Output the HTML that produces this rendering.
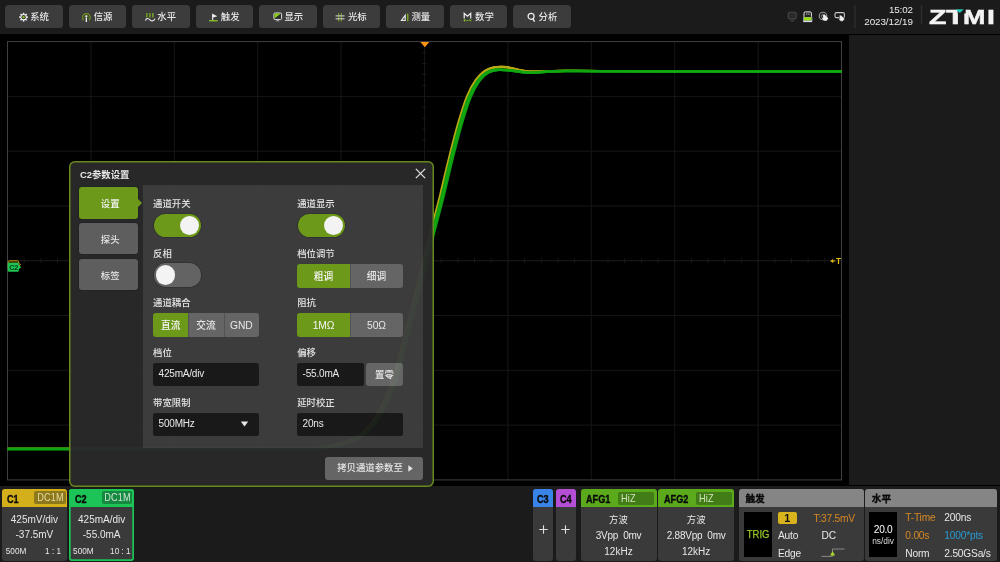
<!DOCTYPE html>
<html lang="zh-CN">
<head>
<meta charset="utf-8">
<title>C2参数设置</title>
<style>
*{box-sizing:border-box;margin:0;padding:0}
html,body{width:1000px;height:562px;overflow:hidden;background:#000}
body{position:relative;font-family:"Liberation Sans","Noto Sans CJK SC",sans-serif;color:#e6e6e6;font-size:10px;line-height:1}
.abs{position:absolute}
/* top bar */
#topbar{opacity:.999;will-change:transform,opacity;position:absolute;left:0;top:0;width:1000px;height:34px;background:#1c1c1c}
.tbtn{position:absolute;top:5px;width:57.5px;height:23.2px;background:#3d3d3d;border-radius:3.5px;color:#e6e6e6;font-size:9.4px;font-weight:500;line-height:23.4px;white-space:nowrap}
.tbtn svg{position:absolute;left:13.5px;top:6.5px;width:10px;height:10px}
.tbtn span{position:absolute;left:25.2px;top:0}
/* right panel */
#rpanel{position:absolute;left:849.2px;top:34.8px;width:150.8px;height:450.5px;background:#1b1b1b}
/* scope */
#scope{position:absolute;left:0;top:34px;width:849px;height:452px;background:#000}
/* bottom bar */
#bottom{opacity:.999;will-change:transform,opacity;position:absolute;left:0;top:486.2px;width:1000px;height:75.8px;background:#1c1c1c}

/* dialog */
#dlg{position:absolute;z-index:5;left:69px;top:161.2px;width:365px;height:326.2px;background:#2a2a2a;border:0;box-shadow:inset 0 0 0 1.5px #6a8f1c;border-radius:6px;opacity:.962;will-change:transform,opacity}
#dlg .in{position:absolute;left:-69px;top:-161.2px;width:0;height:0}
#dlg .title{position:absolute;left:80px;top:169px;font-size:9.4px;font-weight:bold;color:#f2f2f2;line-height:12px;white-space:nowrap}
#dlg .close{position:absolute;left:414.9px;top:168px;width:11px;height:11px}
.tab{position:absolute;left:78.6px;width:59.2px;height:31.2px;border-radius:3px;background:#626262;color:#f0f0f0;font-size:9.4px;font-weight:500;line-height:33.4px;text-align:center;padding-left:4px;box-shadow:0 0 0 .6px #222226}
.tab.on{background:#72a01c;color:#fff}
.tab.on:after{content:"";position:absolute;left:59px;top:11.5px;border-left:4px solid #72a01c;border-top:4px solid transparent;border-bottom:4px solid transparent}
#pane{position:absolute;left:142.7px;top:185.4px;width:280.2px;height:262.4px;background:#3f3f3f}
.lbl{position:absolute;font-size:9.4px;font-weight:500;line-height:12px;color:#ededed;white-space:nowrap}
.tog{position:absolute;width:47.2px;height:23.2px;border-radius:11.6px;background:#686868;box-shadow:0 0 0 .6px #2c2c30}
.tog i{position:absolute;left:2px;top:1.9px;width:19.4px;height:19.4px;border-radius:50%;background:#fdfdfd}
.tog.on{background:#72a01c}
.tog.on i{left:25.8px}
.seg{position:absolute;height:23.8px;display:flex;border-radius:3px;overflow:hidden;font-size:9.7px;font-weight:500;line-height:25.8px;text-align:center;color:#f0f0f0}
.seg b{font-weight:inherit;flex:1 1 0;background:#6a6a6a;box-shadow:inset 1px 0 0 #565656}
.seg b:first-child{box-shadow:none}
.seg b.l{font-size:10.3px;font-weight:normal;letter-spacing:-.1px;line-height:26px}
.seg b.on{background:#72a01c;color:#fff}
.inp{position:absolute;height:23px;border-radius:2.5px;background:#1b1b1b;color:#f2f2f2;font-size:10px;line-height:21.6px;padding-left:5.6px;white-space:nowrap;letter-spacing:-.2px}
.btn{position:absolute;border-radius:3px;background:#6a6a6a;color:#f0f0f0;font-size:9.4px;font-weight:500;text-align:center;white-space:nowrap}

/* bottom */
.ch{position:absolute;top:2.8px;height:72px;border-radius:3px;background:#3b3b3b;overflow:hidden;font-size:10px;color:#e8e8e8}
.ch .hd{position:absolute;left:0;top:0;right:0;height:18px}
.ch .nm{position:absolute;left:5.5px;top:1.1px;font-size:10.6px;font-weight:bold;-webkit-text-stroke:.35px #0a0a0a;color:#0a0a0a;line-height:18.6px;transform:scaleX(.86);transform-origin:0 50%;white-space:nowrap}
.ch .tag{position:absolute;top:2.5px;height:13px;border-radius:2px;font-size:10.6px;line-height:13.4px;text-align:center;color:#e6e0c0;letter-spacing:.2px}
.ch .tag span{display:inline-block;transform:scaleX(.86);transform-origin:50% 50%}
.ch .r{position:absolute;left:0;right:0;text-align:center;line-height:12px;white-space:nowrap}
.ch .s{position:absolute;font-size:8.2px;line-height:10px;white-space:nowrap}
.bt{position:absolute;white-space:nowrap;line-height:12px;font-size:10.2px;letter-spacing:-.2px;margin-top:1.1px}

#logo{position:absolute;left:0;top:0;font-family:"Liberation Sans",sans-serif;font-weight:bold;font-size:20.4px;line-height:20px;color:#f4f4f4;will-change:transform}
#logo span{-webkit-text-stroke:.5px #f4f4f4;position:absolute;top:6.6px;display:block;transform-origin:0 50%}
</style>
</head>
<body>
<div id="topbar">
<div class="tbtn" style="left:5.00px"><svg viewBox="0 0 10 10"><g stroke="#ececec" stroke-width="1.5"><line x1="4.6" y1="0.7" x2="4.6" y2="9.6"/><line x1="0.15" y1="5.15" x2="9.05" y2="5.15"/><line x1="1.5" y1="2.05" x2="7.7" y2="8.25"/><line x1="7.7" y1="2.05" x2="1.5" y2="8.25"/></g><circle cx="4.6" cy="5.15" r="3.1" fill="#ececec"/><circle cx="4.6" cy="5.15" r="2.1" fill="#333"/><circle cx="4.6" cy="5.15" r="1.15" fill="#8fd014"/></svg><span>系统</span></div>
<div class="tbtn" style="left:68.55px"><svg viewBox="0 0 10 10"><path d="M1.6 8.2 A3.9 3.9 0 1 1 7.1 8.2" fill="none" stroke="#6e8f22" stroke-width="1.25"/><path d="M2.9 6.6 A2 2 0 1 1 5.8 6.6" fill="none" stroke="#55701c" stroke-width=".9"/><line x1="4.35" y1="5.6" x2="4.35" y2="10" stroke="#f2f2f2" stroke-width="1.3"/><circle cx="4.35" cy="4.3" r="1.05" fill="#f2f2f2"/></svg><span>信源</span></div>
<div class="tbtn" style="left:132.10px"><svg viewBox="0 0 10 10" style="overflow:visible"><g stroke="#8cc81e" stroke-width="1.1"><line x1="0.9" y1="0.9" x2="0.9" y2="5.4"/><line x1="3.9" y1="0.9" x2="3.9" y2="5.4"/><line x1="6.9" y1="0.9" x2="6.9" y2="5.4"/></g><path d="M-0.6 8.4 C0.6 5.6 2.6 6.4 4 7.8 S7.8 9.6 9 6.6" fill="none" stroke="#ececec" stroke-width="1.15"/></svg><span>水平</span></div>
<div class="tbtn" style="left:195.65px"><svg viewBox="0 0 10 10"><path d="M3.1 1.4 L8.3 4.3 L4.2 5.6 L4.2 8.2 L3.1 8.2 Z" fill="#f0f0f0"/><rect x="0.1" y="8.1" width="8.6" height="1.3" fill="#8cc81e"/></svg><span>触发</span></div>
<div class="tbtn" style="left:259.20px"><svg viewBox="0 0 10 10"><rect x="0.9" y="1" width="7.7" height="6.6" rx="1.2" fill="#2e2e2e" stroke="#e4e4e4" stroke-width="1"/><path d="M1.5 1.6 L7.8 1.6 L1.5 6.6 Z" fill="#8cd018"/><path d="M3 9.3 Q4.75 7.2 6.5 9.3 Z" fill="#d8d8d8"/></svg><span>显示</span></div>
<div class="tbtn" style="left:322.75px"><svg viewBox="0 0 10 10" style="overflow:visible"><g stroke="#7fae1e" stroke-width="1"><line x1="2.65" y1="1.1" x2="2.65" y2="9.5"/><line x1="5.25" y1="1.1" x2="5.25" y2="9.5"/></g><g stroke="#d6d6d6" stroke-width="1.05"><line x1="-0.4" y1="3.9" x2="8.5" y2="3.9"/><line x1="-0.4" y1="6.8" x2="8.5" y2="6.8"/></g></svg><span>光标</span></div>
<div class="tbtn" style="left:386.30px"><svg viewBox="0 0 10 10"><path d="M0.3 9.1 L5.8 1.5 L5.8 9.1 Z M2.6 7.9 L4.6 7.9 L4.6 5.1 Z" fill="#ececec" fill-rule="evenodd"/><line x1="7.8" y1="1.4" x2="7.8" y2="9.3" stroke="#8cc81e" stroke-width="1.1"/></svg><span>测量</span></div>
<div class="tbtn" style="left:449.85px"><svg viewBox="0 0 10 10"><path d="M1.2 6.5 L1.2 1.4 L4.45 4.3 L7.7 1.4 L7.7 6.5" fill="none" stroke="#f0f0f0" stroke-width="1.2" stroke-linejoin="miter"/><g stroke="#8cc81e" stroke-width=".95"><line x1="0.5" y1="8.4" x2="2.7" y2="8.4"/><line x1="1.6" y1="7.3" x2="1.6" y2="9.5"/><line x1="3.6" y1="8.4" x2="5.4" y2="8.4"/><line x1="6.4" y1="7.5" x2="8.2" y2="9.3"/><line x1="8.2" y1="7.5" x2="6.4" y2="9.3"/></g></svg><span>数学</span></div>
<div class="tbtn" style="left:513.40px"><svg viewBox="0 0 10 10"><circle cx="4.1" cy="4.3" r="3" fill="none" stroke="#ececec" stroke-width="1.25"/><line x1="5.9" y1="6.9" x2="7.6" y2="9.6" stroke="#ececec" stroke-width="1.5"/></svg><span>分析</span></div>

<svg class="abs" style="left:780px;top:0;will-change:transform" width="220" height="34" viewBox="780 0 220 34">
<!-- status icons -->
<g fill="none" stroke="#414141" stroke-width="1.5"><rect x="788.4" y="12.6" width="7.6" height="6.2" rx="1.2" fill="#262626"/><path d="M790.2 20.8 H794.2" stroke-width="1.3"/><path d="M790.7 15.6 q1.5 1.3 3 0" stroke-width=".8"/></g>
<g><rect x="804" y="11.9" width="7.4" height="6" rx="1.2" fill="#222" stroke="#e8e8e8" stroke-width="1"/><rect x="806.3" y="13.5" width="1.1" height="1.1" fill="#e8e8e8"/><rect x="808.3" y="13.5" width="1.1" height="1.1" fill="#e8e8e8"/><rect x="803.8" y="17.3" width="7.9" height="3.4" fill="#98e012"/><rect x="803.2" y="20.6" width="8.9" height="1.5" fill="#dcdcf0"/><path d="M803.5 17.3 V21 M812 17.3 V21" stroke="#b8b8d8" stroke-width=".7"/></g>
<g><circle cx="823" cy="16" r="3.8" fill="none" stroke="#9a9a9a" stroke-width="1.1"/><circle cx="823" cy="16" r="1.8" fill="none" stroke="#8a8a8a" stroke-width=".8"/><path d="M822.6 15.2 l2 -0.6 l3.8 4 l-2.2 2.4 l-2.6 -0.4 l-1.6 -2.4 l1.4 -0.4 z" fill="#f0f0f0"/></g>
<g><rect x="835" y="12.6" width="9.4" height="5" rx="1.4" fill="none" stroke="#c8c8c8" stroke-width="1.1"/><path d="M839 15.6 l2 -0.6 l3.8 4 l-2.2 2.4 l-2.6 -0.4 l-1.6 -2.4 l1.4 -0.4 z" fill="#f0f0f0" stroke="#1c1c1c" stroke-width=".5"/></g>
<rect x="854.3" y="5" width="1.3" height="23" fill="#303030"/>
<rect x="920.8" y="5" width="1.3" height="19" fill="#303030"/>
<text x="912.8" y="13.3" text-anchor="end" font-size="9.8" fill="#ececec" font-family="Liberation Sans, sans-serif" letter-spacing="-.15">15:02</text>
<text x="912.8" y="25.1" text-anchor="end" font-size="9.8" fill="#ececec" font-family="Liberation Sans, sans-serif" letter-spacing="-.05">2023/12/19</text>
<!-- logo -->

</svg>
<div id="logo"><span style="left:929.3px;transform:scaleX(1.4)">Z</span><span style="left:946.4px;transform:scaleX(1.5)">T</span><span style="left:962.8px;transform:scaleX(1.32)">M</span><span style="left:986.7px;transform:scaleX(1.4)">I</span><svg style="position:absolute;left:950px;top:0" width="20" height="20" viewBox="950 0 20 20"><rect x="957.7" y="7" width="8" height="6.4" fill="#1c1c1c"/><path d="M955.6 9.3 H963.8 L959.7 13 Z" fill="#1fc8b8"/></svg></div>
</div>
<div id="scope">
<svg class="abs" style="left:0;top:0;will-change:transform" width="849" height="452" viewBox="0 34 849 452">
<g stroke="#161616" stroke-width="1">
<line x1="90.9" y1="41.6" x2="90.9" y2="479.9"/><line x1="174.3" y1="41.6" x2="174.3" y2="479.9"/><line x1="257.7" y1="41.6" x2="257.7" y2="479.9"/><line x1="341.1" y1="41.6" x2="341.1" y2="479.9"/><line x1="424.5" y1="41.6" x2="424.5" y2="479.9"/><line x1="507.9" y1="41.6" x2="507.9" y2="479.9"/><line x1="591.3" y1="41.6" x2="591.3" y2="479.9"/><line x1="674.7" y1="41.6" x2="674.7" y2="479.9"/><line x1="758.1" y1="41.6" x2="758.1" y2="479.9"/><line x1="7.5" y1="96.39" x2="841.5" y2="96.39"/><line x1="7.5" y1="151.17" x2="841.5" y2="151.17"/><line x1="7.5" y1="205.96" x2="841.5" y2="205.96"/><line x1="7.5" y1="260.75" x2="841.5" y2="260.75" stroke="#1d1d1d"/><line x1="7.5" y1="315.54" x2="841.5" y2="315.54"/><line x1="7.5" y1="370.32" x2="841.5" y2="370.32"/><line x1="7.5" y1="425.11" x2="841.5" y2="425.11"/>
</g>
<g stroke="#181818" stroke-width="1">
<line x1="422.5" y1="52.6" x2="426.5" y2="52.6"/><line x1="422.5" y1="63.5" x2="426.5" y2="63.5"/><line x1="422.5" y1="74.5" x2="426.5" y2="74.5"/><line x1="422.5" y1="85.4" x2="426.5" y2="85.4"/><line x1="422.5" y1="107.3" x2="426.5" y2="107.3"/><line x1="422.5" y1="118.3" x2="426.5" y2="118.3"/><line x1="422.5" y1="129.3" x2="426.5" y2="129.3"/><line x1="422.5" y1="140.2" x2="426.5" y2="140.2"/><line x1="422.5" y1="162.1" x2="426.5" y2="162.1"/><line x1="422.5" y1="173.1" x2="426.5" y2="173.1"/><line x1="422.5" y1="184.0" x2="426.5" y2="184.0"/><line x1="422.5" y1="195.0" x2="426.5" y2="195.0"/><line x1="422.5" y1="216.9" x2="426.5" y2="216.9"/><line x1="422.5" y1="227.9" x2="426.5" y2="227.9"/><line x1="422.5" y1="238.8" x2="426.5" y2="238.8"/><line x1="422.5" y1="249.8" x2="426.5" y2="249.8"/><line x1="422.5" y1="271.7" x2="426.5" y2="271.7"/><line x1="422.5" y1="282.7" x2="426.5" y2="282.7"/><line x1="422.5" y1="293.6" x2="426.5" y2="293.6"/><line x1="422.5" y1="304.6" x2="426.5" y2="304.6"/><line x1="422.5" y1="326.5" x2="426.5" y2="326.5"/><line x1="422.5" y1="337.5" x2="426.5" y2="337.5"/><line x1="422.5" y1="348.4" x2="426.5" y2="348.4"/><line x1="422.5" y1="359.4" x2="426.5" y2="359.4"/><line x1="422.5" y1="381.3" x2="426.5" y2="381.3"/><line x1="422.5" y1="392.2" x2="426.5" y2="392.2"/><line x1="422.5" y1="403.2" x2="426.5" y2="403.2"/><line x1="422.5" y1="414.2" x2="426.5" y2="414.2"/><line x1="422.5" y1="436.1" x2="426.5" y2="436.1"/><line x1="422.5" y1="447.0" x2="426.5" y2="447.0"/><line x1="422.5" y1="458.0" x2="426.5" y2="458.0"/><line x1="422.5" y1="468.9" x2="426.5" y2="468.9"/><line x1="24.2" y1="258.2" x2="24.2" y2="263.2"/><line x1="40.9" y1="258.2" x2="40.9" y2="263.2"/><line x1="57.5" y1="258.2" x2="57.5" y2="263.2"/><line x1="74.2" y1="258.2" x2="74.2" y2="263.2"/><line x1="107.6" y1="258.2" x2="107.6" y2="263.2"/><line x1="124.3" y1="258.2" x2="124.3" y2="263.2"/><line x1="140.9" y1="258.2" x2="140.9" y2="263.2"/><line x1="157.6" y1="258.2" x2="157.6" y2="263.2"/><line x1="191.0" y1="258.2" x2="191.0" y2="263.2"/><line x1="207.7" y1="258.2" x2="207.7" y2="263.2"/><line x1="224.3" y1="258.2" x2="224.3" y2="263.2"/><line x1="241.0" y1="258.2" x2="241.0" y2="263.2"/><line x1="274.4" y1="258.2" x2="274.4" y2="263.2"/><line x1="291.1" y1="258.2" x2="291.1" y2="263.2"/><line x1="307.7" y1="258.2" x2="307.7" y2="263.2"/><line x1="324.4" y1="258.2" x2="324.4" y2="263.2"/><line x1="357.8" y1="258.2" x2="357.8" y2="263.2"/><line x1="374.5" y1="258.2" x2="374.5" y2="263.2"/><line x1="391.1" y1="258.2" x2="391.1" y2="263.2"/><line x1="407.8" y1="258.2" x2="407.8" y2="263.2"/><line x1="441.2" y1="258.2" x2="441.2" y2="263.2"/><line x1="457.9" y1="258.2" x2="457.9" y2="263.2"/><line x1="474.5" y1="258.2" x2="474.5" y2="263.2"/><line x1="491.2" y1="258.2" x2="491.2" y2="263.2"/><line x1="524.6" y1="258.2" x2="524.6" y2="263.2"/><line x1="541.3" y1="258.2" x2="541.3" y2="263.2"/><line x1="557.9" y1="258.2" x2="557.9" y2="263.2"/><line x1="574.6" y1="258.2" x2="574.6" y2="263.2"/><line x1="608.0" y1="258.2" x2="608.0" y2="263.2"/><line x1="624.7" y1="258.2" x2="624.7" y2="263.2"/><line x1="641.3" y1="258.2" x2="641.3" y2="263.2"/><line x1="658.0" y1="258.2" x2="658.0" y2="263.2"/><line x1="691.4" y1="258.2" x2="691.4" y2="263.2"/><line x1="708.1" y1="258.2" x2="708.1" y2="263.2"/><line x1="724.7" y1="258.2" x2="724.7" y2="263.2"/><line x1="741.4" y1="258.2" x2="741.4" y2="263.2"/><line x1="774.8" y1="258.2" x2="774.8" y2="263.2"/><line x1="791.5" y1="258.2" x2="791.5" y2="263.2"/><line x1="808.1" y1="258.2" x2="808.1" y2="263.2"/><line x1="824.8" y1="258.2" x2="824.8" y2="263.2"/>
</g>
<rect x="7.5" y="41.6" width="834.0" height="438.3" fill="none" stroke="#404040" stroke-width="1"/>
<g fill="none" stroke-linejoin="round" stroke-linecap="butt"><path id="wy" d="M8.0 448.8 C31.7 448.8 101.3 448.8 150.0 448.8 C198.7 448.8 271.8 449.0 300.0 448.8 C328.2 448.6 312.7 448.4 319.1 447.8 C325.5 447.1 332.5 446.0 338.2 444.6 C343.9 443.2 349.0 441.3 353.2 439.3 C357.4 437.3 359.9 435.7 363.2 432.8 C366.5 429.9 369.9 426.4 373.2 421.8 C376.5 417.2 380.2 411.2 383.2 405.3 C386.2 399.4 388.7 393.3 391.2 386.3 C393.7 379.3 395.4 373.6 398.2 363.3 C401.0 353.0 404.9 337.4 408.2 324.3 C411.5 311.2 414.4 300.0 418.2 284.8 C422.0 269.6 427.2 248.3 431.0 233.3 C434.8 218.3 437.9 207.5 441.0 194.9 C444.1 182.3 446.9 169.5 449.9 157.7 C452.9 145.9 455.8 134.1 458.8 123.9 C461.8 113.7 464.7 104.0 467.7 96.7 C470.7 89.4 473.6 84.2 476.6 80.0 C479.6 75.7 482.5 73.1 485.5 71.0 C488.5 68.9 490.8 68.0 494.4 67.4 C497.9 66.8 501.4 66.6 506.8 67.2 C512.2 67.9 520.3 70.8 526.8 71.4 C533.2 72.1 539.0 71.4 545.4 71.3 C551.7 71.2 555.9 70.8 565.0 70.8 C574.1 70.8 577.5 70.9 600.0 71.0 C622.5 71.1 659.8 71.1 700.0 71.2 C740.2 71.3 817.5 71.3 841.0 71.3" stroke="#b8a814" stroke-width="2.2"/><use href="#wy" x="-0.8"/><use href="#wy" x="0.8"/>
<path id="wg" d="M8.0 449.0 C31.7 449.0 101.3 449.0 150.0 449.0 C198.7 449.0 271.7 449.1 300.0 449.0 C328.3 448.9 313.3 448.8 320.0 448.2 C326.7 447.6 334.2 446.7 340.0 445.3 C345.8 443.9 350.8 442.0 355.0 440.0 C359.2 438.0 361.7 436.4 365.0 433.5 C368.3 430.6 371.7 427.1 375.0 422.5 C378.3 417.9 382.0 411.9 385.0 406.0 C388.0 400.1 390.5 394.0 393.0 387.0 C395.5 380.0 397.2 374.3 400.0 364.0 C402.8 353.7 406.7 338.1 410.0 325.0 C413.3 311.9 416.2 300.7 420.0 285.5 C423.8 270.3 429.0 249.0 432.8 234.0 C436.6 219.0 439.7 208.2 442.8 195.6 C445.9 183.0 448.7 170.2 451.7 158.4 C454.7 146.6 457.6 134.8 460.6 124.6 C463.6 114.4 466.5 104.8 469.5 97.5 C472.5 90.2 475.4 85.1 478.4 81.0 C481.4 76.9 484.3 74.5 487.3 72.7 C490.3 70.9 492.6 70.3 496.2 69.9 C499.8 69.5 503.3 69.7 508.6 70.2 C513.9 70.7 522.0 72.5 528.2 72.7 C534.4 73.0 539.9 72.0 546.0 71.7 C552.1 71.4 556.0 71.1 565.0 71.0 C574.0 70.9 577.5 71.1 600.0 71.2 C622.5 71.3 659.8 71.4 700.0 71.4 C740.2 71.5 817.5 71.5 841.0 71.5" stroke="#0e9e10" stroke-width="2.6"/><use href="#wg" x="-0.9"/><use href="#wg" x="0.9"/>
<path d="M8.0 449.0 C31.7 449.0 101.3 449.0 150.0 449.0 C198.7 449.0 271.7 449.1 300.0 449.0 C328.3 448.9 313.3 448.8 320.0 448.2 C326.7 447.6 334.2 446.7 340.0 445.3 C345.8 443.9 350.8 442.0 355.0 440.0 C359.2 438.0 361.7 436.4 365.0 433.5 C368.3 430.6 371.7 427.1 375.0 422.5 C378.3 417.9 382.0 411.9 385.0 406.0 C388.0 400.1 390.5 394.0 393.0 387.0 C395.5 380.0 397.2 374.3 400.0 364.0 C402.8 353.7 406.7 338.1 410.0 325.0 C413.3 311.9 416.2 300.7 420.0 285.5 C423.8 270.3 429.0 249.0 432.8 234.0 C436.6 219.0 439.7 208.2 442.8 195.6 C445.9 183.0 448.7 170.2 451.7 158.4 C454.7 146.6 457.6 134.8 460.6 124.6 C463.6 114.4 466.5 104.8 469.5 97.5 C472.5 90.2 475.4 85.1 478.4 81.0 C481.4 76.9 484.3 74.5 487.3 72.7 C490.3 70.9 492.6 70.3 496.2 69.9 C499.8 69.5 503.3 69.7 508.6 70.2 C513.9 70.7 522.0 72.5 528.2 72.7 C534.4 73.0 539.9 72.0 546.0 71.7 C552.1 71.4 556.0 71.1 565.0 71.0 C574.0 70.9 577.5 71.1 600.0 71.2 C622.5 71.3 659.8 71.4 700.0 71.4 C740.2 71.5 817.5 71.5 841.0 71.5" stroke="#16b816" stroke-width="1.2" opacity=".55"/></g>
<path d="M420.4 41.9 L429.3 41.9 L424.85 47.2 Z" fill="#fb9412"/>
<text x="835.9" y="263.9" font-size="8.2" font-weight="bold" fill="#e6be10" font-family="Liberation Sans, sans-serif">T</text><path d="M830.2 261 L833.2 259 L833.2 260.5 L835.4 260.5 L835.4 261.5 L833.2 261.5 L833.2 263 Z" fill="#e6be10"/>
<g><path d="M9.4 260.7 h8 q1.2 0 1.2 1.2 v1.2 l2 1.6 l-2 1.6 v2 h-10.4 v-6.4 q0 -1.2 1.2 -1.2 z" fill="#3a2c04" stroke="#c29a14" stroke-width=".9"/><path d="M8.8 262.8 h9 q1.1 0 1.1 1.1 v1.6 l2.5 1.8 l-2.5 1.8 v1.5 q0 1.1 -1.1 1.1 h-9 q-1.1 0 -1.1 -1.1 v-6.7 q0 -1.1 1.1 -1.1 z" fill="#1cc452"/><text x="9.2" y="270" font-size="7.4" font-weight="bold" fill="#04361a" font-family="Liberation Sans, sans-serif" letter-spacing="-.3">C2</text></g>
</svg>
</div>
<div id="rpanel"></div>
<div id="dlg"><div class="in">
<div class="title">C2参数设置</div>
<svg class="close" viewBox="0 0 10 10"><path d="M0.8 0.8 L9.2 9.2 M9.2 0.8 L0.8 9.2" stroke="#e8e8e8" stroke-width="1.2" fill="none"/></svg>
<div class="tab on" style="top:187.6px">设置</div>
<div class="tab" style="top:223.2px">探头</div>
<div class="tab" style="top:259px">标签</div>
<div id="pane"></div>
<div class="lbl" style="left:153.1px;top:198.5px">通道开关</div>
<div class="tog on" style="left:154px;top:214px"><i></i></div>
<div class="lbl" style="left:153.1px;top:248.2px">反相</div>
<div class="tog" style="left:154px;top:263.6px"><i></i></div>
<div class="lbl" style="left:153.1px;top:297.6px">通道耦合</div>
<div class="seg" style="left:153px;top:313.5px;width:106px"><b class="on">直流</b><b>交流</b><b class="l">GND</b></div>
<div class="lbl" style="left:153.1px;top:347px">档位</div>
<div class="inp" style="left:153px;top:363px;width:106px">425mA/div</div>
<div class="lbl" style="left:153.1px;top:397px">带宽限制</div>
<div class="inp" style="left:153px;top:412.7px;width:106px">500MHz<svg style="position:absolute;left:87px;top:8.5px" width="9" height="6" viewBox="0 0 9 6"><path d="M0.8 0.5 L8.2 0.5 L4.5 5.5 Z" fill="#f0f0f0"/></svg></div>

<div class="lbl" style="left:297.2px;top:198.5px">通道显示</div>
<div class="tog on" style="left:298.3px;top:214px"><i></i></div>
<div class="lbl" style="left:297.2px;top:248.2px">档位调节</div>
<div class="seg" style="left:297px;top:264px;width:106px"><b class="on">粗调</b><b>细调</b></div>
<div class="lbl" style="left:297.2px;top:297.6px">阻抗</div>
<div class="seg" style="left:297px;top:313.5px;width:106px"><b class="on l">1MΩ</b><b class="l">50Ω</b></div>
<div class="lbl" style="left:297.2px;top:347px">偏移</div>
<div class="inp" style="left:297px;top:363px;width:67px">-55.0mA</div>
<div class="btn" style="left:366px;top:363px;width:37px;height:23px;line-height:23px">置零</div>
<div class="lbl" style="left:297.2px;top:397px">延时校正</div>
<div class="inp" style="left:297px;top:412.7px;width:106px">20ns</div>
<div class="btn" style="left:325px;top:457.5px;width:98px;height:22.5px;line-height:22.5px;padding-right:8px">拷贝通道参数至<svg style="position:absolute;left:82.5px;top:8px" width="5" height="7" viewBox="0 0 5 7"><path d="M0.3 0.3 L4.8 3.5 L0.3 6.7 Z" fill="#f0f0f0"/></svg></div>
</div></div>
<div id="bottom">
<div class="ch" style="left:1.8px;width:65.2px"><div class="hd" style="background:#d4b01c"></div><div class="nm">C1</div><div class="tag" style="left:32.5px;width:31.5px;background:#8e7a1c;color:#e6dca8"><span>DC1M</span></div>
<div class="r" style="top:25.4px">425mV/div</div><div class="r" style="top:40.7px">-37.5mV</div><div class="s" style="left:4px;top:58.6px">500M</div><div class="s" style="right:6px;top:58.6px">1 : 1</div></div>
<div class="ch" style="left:68.9px;width:65.5px;box-shadow:inset 0 0 0 1.7px #1dc458"><div class="hd" style="background:#1dc458"></div><div class="nm" style="left:6px">C2</div><div class="tag" style="left:32.8px;width:30.6px;background:#178a42;color:#cfe8d4"><span>DC1M</span></div>
<div class="r" style="top:25.4px">425mA/div</div><div class="r" style="top:40.7px">-55.0mA</div><div class="s" style="left:4.2px;top:58.6px">500M</div><div class="s" style="right:3.8px;top:58.6px">10 : 1</div></div>

<div class="ch" style="left:533px;width:20.3px"><div class="hd" style="background:#3a86e8"></div><div class="nm" style="left:4px">C3</div><svg style="position:absolute;left:5.5px;top:36.5px" width="9" height="9" viewBox="0 0 9 9"><path d="M4.5 0.3 V8.7 M0.3 4.5 H8.7" stroke="#e0e0e0" stroke-width="1.1"/></svg></div>
<div class="ch" style="left:555.6px;width:20.6px"><div class="hd" style="background:#b44fd6"></div><div class="nm" style="left:4px">C4</div><svg style="position:absolute;left:5.8px;top:36.5px" width="9" height="9" viewBox="0 0 9 9"><path d="M4.5 0.3 V8.7 M0.3 4.5 H8.7" stroke="#e0e0e0" stroke-width="1.1"/></svg></div>
<div class="ch" style="left:580.5px;width:76px"><div class="hd" style="background:#5cab1c"></div><div class="nm" style="left:5.5px">AFG1</div><div class="tag" style="left:37.5px;width:36px;background:#437d17;color:#d4e6c0;text-align:left;padding-left:3px;top:3.5px;height:12.4px;line-height:12.6px"><span style="transform-origin:0 50%">HiZ</span></div>
<div class="r" style="top:24.9px;font-size:9.4px">方波</div><div class="r" style="top:41.2px;letter-spacing:-.25px">3Vpp&nbsp; 0mv</div><div class="r" style="top:57.3px">12kHz</div></div>
<div class="ch" style="left:658.3px;width:75.7px"><div class="hd" style="background:#5cab1c"></div><div class="nm" style="left:5.5px">AFG2</div><div class="tag" style="left:37.5px;width:36px;background:#437d17;color:#d4e6c0;text-align:left;padding-left:3px;top:3.5px;height:12.4px;line-height:12.6px"><span style="transform-origin:0 50%">HiZ</span></div>
<div class="r" style="top:24.9px;font-size:9.4px">方波</div><div class="r" style="top:41.2px;letter-spacing:-.25px">2.88Vpp&nbsp; 0mv</div><div class="r" style="top:57.3px">12kHz</div></div>

<div class="ch" style="left:739px;width:124.5px"><div class="hd" style="background:#868686"></div><div class="nm" style="left:6.5px;font-size:9.6px;transform:none;top:.8px">触发</div>
<div style="position:absolute;left:4.7px;top:22.9px;width:28px;height:45.6px;background:#000;color:#9acb28;font-size:11px;line-height:45.6px;text-align:center"><span style="display:inline-block;transform:scaleX(.86);-webkit-text-stroke:.25px #9acb28">TRIG</span></div>
<div style="position:absolute;left:39px;top:23.6px;width:18.6px;height:11.6px;border-radius:2px;background:#d9b41c;color:#111;font-size:10.8px;font-weight:bold;line-height:12.2px;text-align:center">1</div>
<div class="bt" style="left:74.5px;top:23.2px;color:#d88a24">T:37.5mV</div>
<div class="bt" style="left:39px;top:40px">Auto</div><div class="bt" style="left:82.5px;top:40px">DC</div>
<div class="bt" style="left:39px;top:58px">Edge</div>
<svg style="position:absolute;left:82px;top:57.2px" width="25" height="12" viewBox="0 0 25 12"><path d="M0.5 10.4 H11.5 V3 H23.5" fill="none" stroke="#8a8a8a" stroke-width="1"/><path d="M9 9.4 L11.6 5.2 L14.2 9.4 Z" fill="#a8d628"/></svg>
</div>
<div class="ch" style="left:865.3px;width:131.3px"><div class="hd" style="background:#868686"></div><div class="nm" style="left:6.5px;font-size:9.6px;transform:none;top:.8px">水平</div>
<div style="position:absolute;left:3.6px;top:22.9px;width:28.4px;height:45.6px;background:#000"></div>
<div class="bt" style="left:3.6px;width:28.4px;text-align:center;top:34.6px;color:#fff;font-size:10.2px;letter-spacing:-.3px">20.0</div>
<div class="bt" style="left:2.6px;width:30.4px;text-align:center;top:44.8px;font-size:8.4px;letter-spacing:0;color:#ddd">ns/div</div>
<div class="bt" style="left:40px;top:21.8px;color:#d88a24">T-Time</div><div class="bt" style="left:79px;top:21.8px">200ns</div>
<div class="bt" style="left:40px;top:40px;color:#d88a24">0.00s</div><div class="bt" style="left:79px;top:40px;color:#2a9bd4">1000*pts</div>
<div class="bt" style="left:40px;top:58px">Norm</div><div class="bt" style="left:79px;top:58px">2.50GSa/s</div>
</div>
</div>
</body>
</html>
